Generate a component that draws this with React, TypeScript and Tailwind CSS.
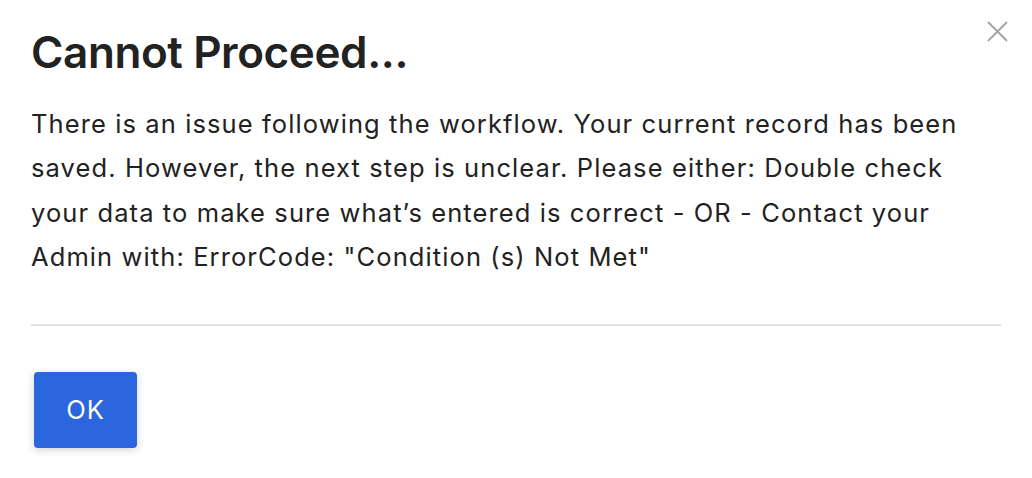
import React from "react";

export default function App() {
  return (
    <div className="relative w-[1032px] h-[478px] bg-white text-[#222222]" style={{ fontFamily: "Inter, 'Noto Sans', sans-serif" }}>
      <button aria-label="Close" className="absolute right-[24px] top-[21px] w-[21px] h-[21px] text-[#a3a3a3]">
        <svg viewBox="0 0 21 21" width="21" height="21" fill="none" stroke="currentColor" strokeWidth="1.8">
          <path d="M1 1 L20 20 M20 1 L1 20" />
        </svg>
      </button>
      <div className="px-[31px] pt-[25px]">
        <h1 className="text-[44px] leading-[54px] font-semibold tracking-[-0.4px]">Cannot Proceed...</h1>
        <p className="mt-[23px] text-[25.5px] leading-[44.3px] tracking-[1.1px]">
          There is an issue following the workflow. Your current record has been saved. However, the next step is unclear. Please either: Double check your data to make sure what’s entered is correct - OR - Contact your Admin with: ErrorCode: "Condition (s) Not Met"
        </p>
        <div className="mt-[45px] h-[2px] bg-[#e3e3e3]" />
        <button className="mt-[46px] ml-[3px] w-[103px] h-[76px] rounded-[4px] bg-[#2b66de] text-white text-[25.5px] tracking-[1px] shadow-[0_2px_8px_rgba(0,0,0,0.18)]">
          OK
        </button>
      </div>
    </div>
  );
}
